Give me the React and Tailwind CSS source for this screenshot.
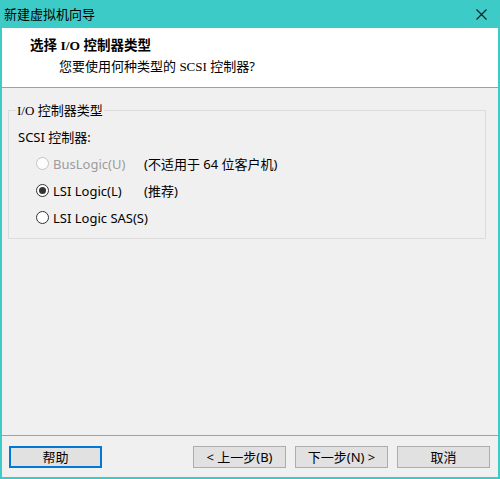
import React from "react";

const font = {
  fontFamily: '"Segoe UI", "Noto Sans", "Noto Sans CJK SC", sans-serif',
};

const serif = { fontFamily: '"Liberation Serif", serif' };

function Radio({ checked, disabled }) {
  return (
    <span
      className={`flex h-[13px] w-[13px] shrink-0 items-center justify-center rounded-full border ${
        disabled ? "border-[#c4c4c4] bg-[#fcfcfc]" : "border-[#333] bg-white"
      }`}
    >
      {checked && <span className="h-[7px] w-[7px] rounded-full bg-[#333]" />}
    </span>
  );
}

function Option({ label, note, checked, disabled }) {
  return (
    <div className="flex h-[27px] items-center whitespace-nowrap">
      <div className="flex w-[126px] items-center gap-[4px] pl-[18px]">
        <Radio checked={checked} disabled={disabled} />
        <span className={disabled ? "text-[#9c9c9c]" : "text-black"}>{label}</span>
      </div>
      {note && <span className="text-black">{note}</span>}
    </div>
  );
}

function Button({ children, focused }) {
  return (
    <button
      className={`h-[22px] w-[93px] bg-[#e1e1e1] text-[13px] leading-[16px] text-black ${
        focused ? "border-2 border-[#0078d7]" : "border border-[#adadad]"
      }`}
    >
      {children}
    </button>
  );
}

export default function App() {
  return (
    <div
      className="flex h-[479px] w-[500px] flex-col border-x-2 border-b-2 border-[#3dcbc8] bg-[#f0f0f0] text-[13px] leading-[16px] text-black"
      style={font}
    >
      {/* title bar */}
      <div className="-mx-[2px] flex h-[28px] shrink-0 items-center justify-between bg-[#3dcbc8] pl-[4px] pr-[13px]">
        <span className="text-[13px]">新建虚拟机向导</span>
        <svg width="11" height="11" viewBox="0 0 11 11" className="stroke-[#1a1a1a]">
          <path d="M0.5 0.5 L10.5 10.5 M10.5 0.5 L0.5 10.5" strokeWidth="1.1" />
        </svg>
      </div>

      {/* header */}
      <div className="flex h-[60px] shrink-0 flex-col border-b border-[#a0a0a0] bg-white pl-[28px] pt-[8px]">
        <span className="text-[13.5px] font-bold leading-[18px]">
          选择 <span style={serif}>I/O</span> 控制器类型
        </span>
        <span className="mt-[3px] pl-[29px] text-[13px]">
          您要使用何种类型的 <span style={serif}>SCSI</span> 控制器?
        </span>
      </div>

      {/* body */}
      <div className="flex flex-1 flex-col px-[6px] pt-[14px]">
        <fieldset className="mr-[6px] border border-[#dcdcdc] pb-[7px] pl-[9px] pr-[6px]">
          <legend className="-ml-[2px] px-[1px]">
            <span style={serif}>I/O</span> 控制器类型
          </legend>
          <div className="mt-[10px]">SCSI 控制器:</div>
          <div className="mt-[5px] flex flex-col">
            <Option label="BusLogic(U)" note="(不适用于 64 位客户机)" disabled />
            <Option label="LSI Logic(L)" note="(推荐)" checked />
            <Option label="LSI Logic SAS(S)" />
          </div>
        </fieldset>
      </div>

      {/* footer */}
      <div className="flex h-[42px] shrink-0 items-start border-t border-[#a0a0a0] pl-[7px] pt-[10px]">
        <Button focused>帮助</Button>
        <div className="ml-auto mr-[8px] flex gap-[9px]">
          <Button>&lt; 上一步(B)</Button>
          <Button>下一步(N) &gt;</Button>
          <Button>取消</Button>
        </div>
      </div>
    </div>
  );
}
